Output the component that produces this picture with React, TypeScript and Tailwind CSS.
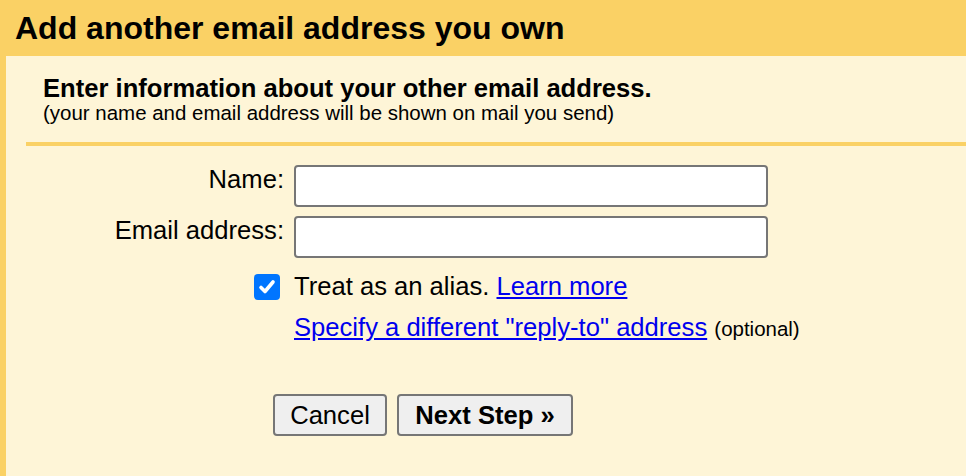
export default function App() {
  return (
    <div className="flex h-[476px] w-[966px] flex-col overflow-hidden bg-[#fad165] font-['Liberation_Sans',Arial,sans-serif] text-black">
      <div className="h-[56px] shrink-0 pl-[15px]">
        <h1 className="text-[32px] font-bold leading-[57px]">
          Add another email address you own
        </h1>
      </div>

      <div className="ml-[6px] flex-1 bg-[#fef5d7]">
        <div className="pl-[37px] pt-[20px]">
          <div className="text-[25.6px] font-bold leading-[24px]">
            Enter information about your other email address.
          </div>
          <div className="mt-[2px] text-[20.48px] leading-[22px]">
            (your name and email address will be shown on mail you send)
          </div>
        </div>

        <div className="ml-[20px] mt-[18px] h-[4px] bg-[#fad165]" />

        <div className="mt-[19px] flex flex-col text-[25.6px]">
          <div className="flex items-start">
            <label className="w-[278px] text-right leading-[28px]">Name:</label>
            <input
              type="text"
              className="ml-[10px] h-[42px] w-[474px] rounded-[4px] border-2 border-[#767676] bg-white px-2 outline-none"
            />
          </div>
          <div className="mt-[9px] flex items-start">
            <label className="w-[278px] text-right leading-[28px]">
              Email address:
            </label>
            <input
              type="text"
              className="ml-[10px] h-[42px] w-[474px] rounded-[4px] border-2 border-[#767676] bg-white px-2 outline-none"
            />
          </div>

          <div className="mt-[14px] flex items-center">
            <div className="flex w-[274px] justify-end">
              <span className="flex h-[26px] w-[26px] items-center justify-center rounded-[4px] bg-[#0075ff]">
                <svg width="20" height="20" viewBox="0 0 20 20" fill="none">
                  <path
                    d="M4 10.5 L8 14.5 L16 5"
                    stroke="white"
                    strokeWidth="3.6"
                    strokeLinecap="round"
                    strokeLinejoin="round"
                  />
                </svg>
              </span>
            </div>
            <span className="ml-[14px] leading-[29px]">
              Treat as an alias.{" "}
              <a href="#" className="text-[#0000ee] underline">
                Learn more
              </a>
            </span>
          </div>

          <div className="mt-[12px] pl-[288px] leading-[29px]">
            <a href="#" className="text-[#0000ee] underline">
              Specify a different "reply-to" address
            </a>{" "}
            <span className="text-[20.48px]">(optional)</span>
          </div>

          <div className="ml-[267px] mt-[51px] flex gap-[10px]">
            <button className="h-[42px] w-[114px] rounded-[4px] border-2 border-[#767676] bg-[#efefef] text-[25.6px]">
              Cancel
            </button>
            <button className="h-[42px] w-[176px] rounded-[4px] border-2 border-[#767676] bg-[#efefef] text-[25.6px] font-bold">
              Next Step »
            </button>
          </div>
        </div>
      </div>
    </div>
  );
}
